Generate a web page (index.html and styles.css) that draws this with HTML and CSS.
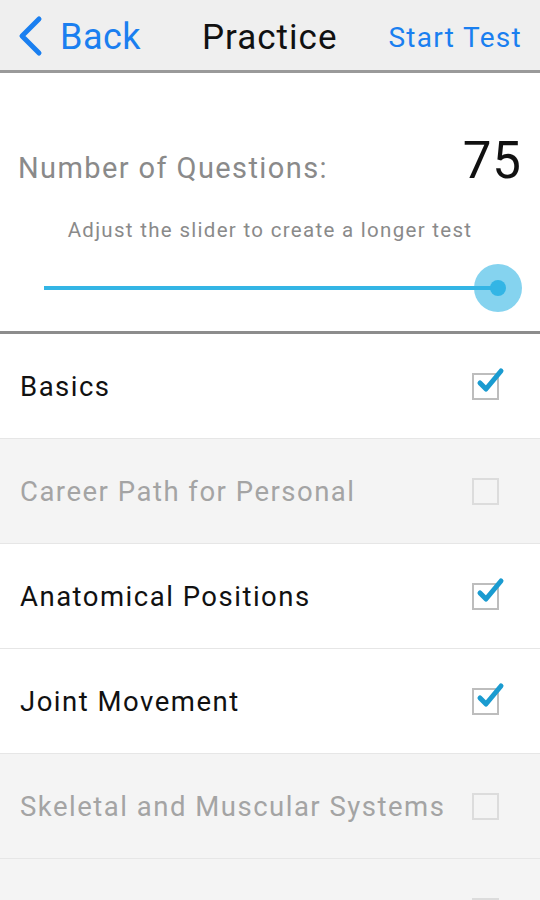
FILE: index.html
```html
<!DOCTYPE html>
<html>
<head>
<meta charset="utf-8">
<link rel="stylesheet" href="styles.css">
</head>
<body>
<div class="app">
  <header class="topbar">
    <div class="back">
      <svg class="chev" width="28" height="42" viewBox="0 0 28 42"><path d="M23 4 L6 21 L23 38" fill="none" stroke="#1a7ff0" stroke-width="5" stroke-linecap="round" stroke-linejoin="round"/></svg>
      <span>Back</span>
    </div>
    <div class="title">Practice</div>
    <div class="start">Start Test</div>
  </header>
  <section class="count">
    <div class="count-row">
      <span class="label">Number of Questions:</span>
      <span class="num">75</span>
    </div>
    <div class="hint">Adjust the slider to create a longer test</div>
    <div class="slider">
      <div class="track"></div>
      <div class="thumb"><div class="dot"></div></div>
    </div>
  </section>
  <ul class="list">
    <li class="row"><span>Basics</span><span class="cb on"><svg viewBox="0 0 34 34" width="34" height="34"><path d="M8 19 L14 25 L29 7" fill="none" stroke="#1a9bd0" stroke-width="5" stroke-linecap="round" stroke-linejoin="round"/></svg></span></li>
    <li class="row off"><span>Career Path for Personal</span><span class="cb"></span></li>
    <li class="row"><span>Anatomical Positions</span><span class="cb on"><svg viewBox="0 0 34 34" width="34" height="34"><path d="M8 19 L14 25 L29 7" fill="none" stroke="#1a9bd0" stroke-width="5" stroke-linecap="round" stroke-linejoin="round"/></svg></span></li>
    <li class="row"><span>Joint Movement</span><span class="cb on"><svg viewBox="0 0 34 34" width="34" height="34"><path d="M8 19 L14 25 L29 7" fill="none" stroke="#1a9bd0" stroke-width="5" stroke-linecap="round" stroke-linejoin="round"/></svg></span></li>
    <li class="row off"><span>Skeletal and Muscular Systems</span><span class="cb"></span></li>
    <li class="row off"><span>&nbsp;</span><span class="cb"></span></li>
  </ul>
</div>
</body>
</html>
```
FILE: styles.css
```css
* { box-sizing: border-box; }
html, body { margin: 0; padding: 0; }
body { font-family: Roboto, "Noto Sans", sans-serif; background: #fff; width: 540px; height: 900px; overflow: hidden; }
.app { width: 540px; }
.topbar {
  height: 73px;
  background: #efefef;
  border-bottom: 3px solid #9a9a9a;
  display: flex;
  align-items: center;
  padding: 4px 18px 0 16px;
}
.back { display: flex; align-items: center; color: #1a7ff0; font-size: 36px; width: 186px; letter-spacing: 0.5px; }
.back .chev { margin-right: 16px; margin-top: -2px; }
.title { color: #111; font-size: 35px; flex: 1; padding-left: 0; letter-spacing: 1px; }
.start { color: #1a7ff0; font-size: 28px; letter-spacing: 1.3px; }
.count { height: 261px; border-bottom: 3px solid #8c8c8c; padding: 0 18px; }
.count-row { display: flex; justify-content: space-between; align-items: baseline; padding-top: 58px; }
.label { color: #8a8a8a; font-size: 29px; letter-spacing: 1.4px; }
.num { color: #111; font-size: 51px; letter-spacing: 1px; }
.hint { color: #8a8a8a; font-size: 20.5px; text-align: center; margin-top: 28px; letter-spacing: 1.3px; }
.slider { position: relative; height: 50px; margin: 21px 0 0 26px; width: 478px; }
.track { position: absolute; left: 0; right: 24px; top: 23px; height: 4px; background: #33b5e5; }
.thumb { position: absolute; right: 0; top: 1px; width: 48px; height: 48px; border-radius: 50%; background: rgba(51,181,229,0.6); display: flex; align-items: center; justify-content: center; }
.dot { width: 16px; height: 16px; border-radius: 50%; background: #33b5e5; }
.list { list-style: none; margin: 0; padding: 0; }
.row {
  height: 105px;
  border-bottom: 1px solid #e6e6e6;
  display: flex;
  align-items: center;
  justify-content: space-between;
  padding: 0 41px 0 20px;
  font-size: 27.5px;
  letter-spacing: 1.5px;
  color: #111;
  background: #fff;
}
.row.off { background: #f4f4f4; color: #a4a4a4; }
.cb { width: 27px; height: 27px; border: 2px solid #bdbdbd; position: relative; flex: none; }
.row.off .cb { border-color: #dcdcdc; }
.cb svg { position: absolute; left: -2px; top: -11px; }
```
